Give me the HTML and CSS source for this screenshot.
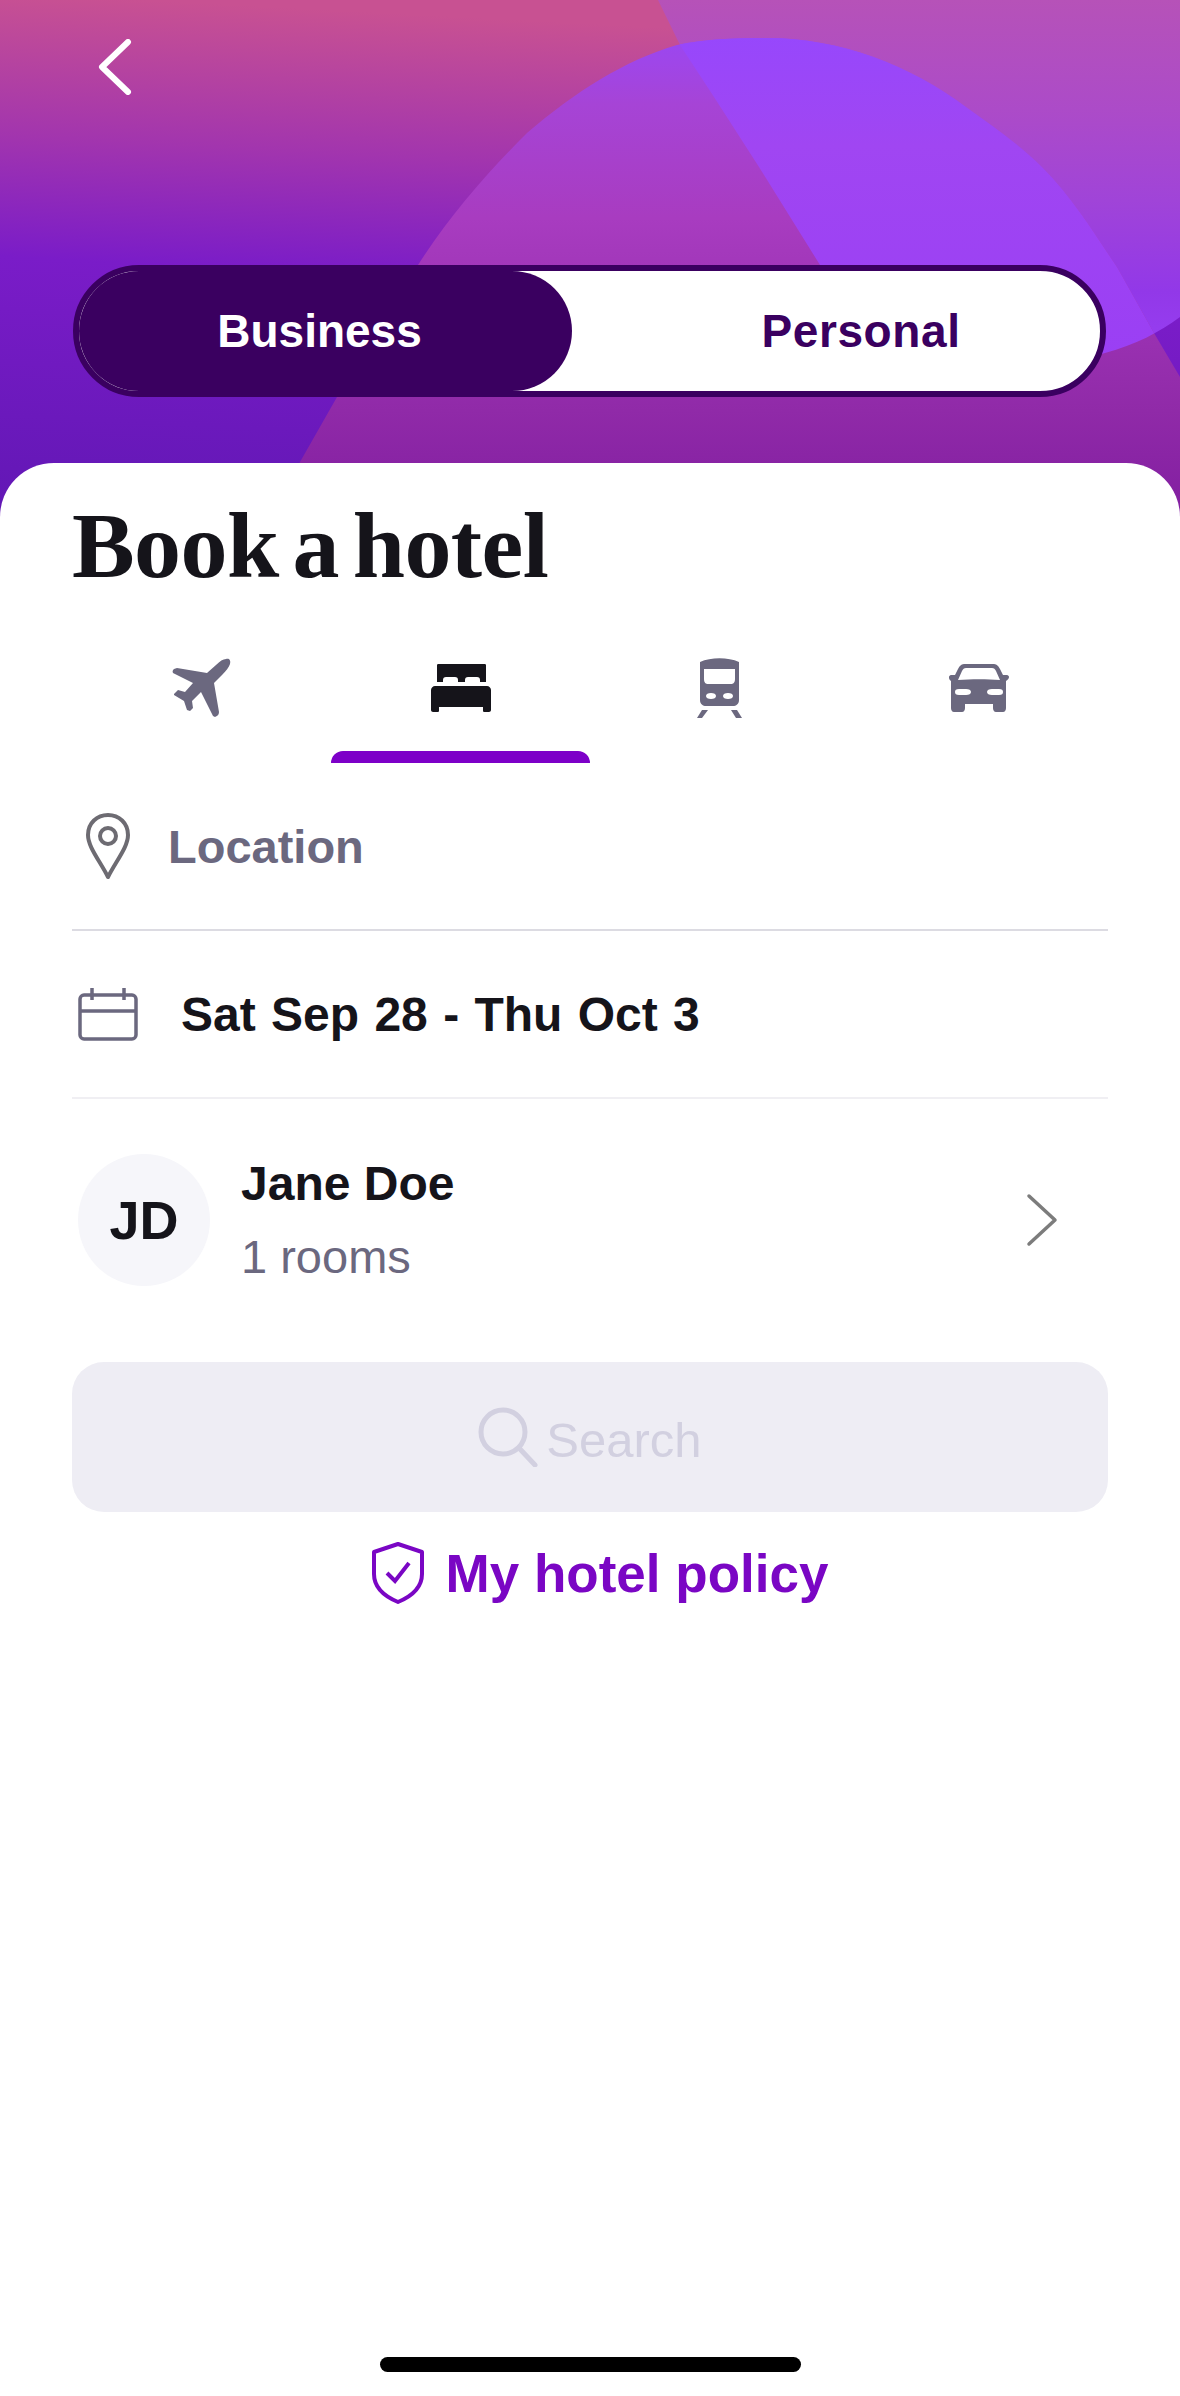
FILE: index.html
```html
<!DOCTYPE html>
<html lang="en">
<head>
    <meta charset="UTF-8">
    <meta name="viewport" content="width=device-width, initial-scale=1.0">
    <title>Book a hotel</title>
    <link rel="stylesheet" href="styles.css">
</head>
<body>
    <div class="screen">
        <header class="hero">
            <svg class="hero-bg" viewBox="0 0 1180 520" aria-hidden="true">
                <defs>
                    <linearGradient id="bgBase" x1="0.12" y1="0" x2="0" y2="1">
                        <stop offset="0" stop-color="#c85192"/>
                        <stop offset="0.27" stop-color="#a235ae"/>
                        <stop offset="0.5" stop-color="#7a1cc8"/>
                        <stop offset="1" stop-color="#6117b4"/>
                    </linearGradient>
                    <linearGradient id="bgBand" x1="0" y1="0" x2="0" y2="1">
                        <stop offset="0" stop-color="#b652b8"/>
                        <stop offset="0.3" stop-color="#ac4bc8"/>
                        <stop offset="0.55" stop-color="#a044d8"/>
                        <stop offset="0.8" stop-color="#9238e8"/>
                        <stop offset="1" stop-color="#9840f4"/>
                    </linearGradient>
                    <linearGradient id="bgHump" x1="0" y1="0" x2="0" y2="1">
                        <stop offset="0" stop-color="#9347ff"/>
                        <stop offset="0.12" stop-color="#9f46e8"/>
                        <stop offset="0.2" stop-color="#a644d6"/>
                        <stop offset="0.42" stop-color="#a83cc0"/>
                        <stop offset="0.79" stop-color="#902aa8"/>
                        <stop offset="0.96" stop-color="#8420a2"/>
                    </linearGradient>
                    <linearGradient id="bgBright" x1="0" y1="0" x2="0" y2="1">
                        <stop offset="0" stop-color="#9448ff"/>
                        <stop offset="0.4" stop-color="#a046f2"/>
                        <stop offset="1" stop-color="#9a3ff4"/>
                    </linearGradient>
                    <clipPath id="humpClip">
                        <path d="M267 520 L337 397 L418 265 C450 215 490 170 527 133 C575 92 625 60 677 45 C705 39 735 38 767 38 C840 38 910 65 966 107 C995 128 1020 145 1042 167 C1075 200 1095 235 1117 267 L1154 333 L1180 377 L1180 520 Z"/>
                    </clipPath>
                </defs>
                <rect width="1180" height="520" fill="url(#bgBase)"/>
                <path d="M658 0 L680 45 L714 97 L759 167 L820 265 C880 345 1000 385 1105 353 C1135 345 1160 332 1180 317 L1180 0 Z" fill="url(#bgBand)"/>
                <rect width="1180" height="520" fill="url(#bgHump)" clip-path="url(#humpClip)"/>
                <g clip-path="url(#humpClip)">
                    <path d="M658 0 L680 45 L714 97 L759 167 L820 265 C880 345 1000 385 1105 353 C1135 345 1160 332 1180 317 L1180 0 Z" fill="url(#bgBright)"/>
                </g>
            </svg>
            <a class="back" href="#" aria-label="Back">
                <svg viewBox="0 0 34 56" width="34" height="56"><path d="M30 3 L4 28 L30 53" fill="none" stroke="#fff" stroke-width="6" stroke-linecap="round" stroke-linejoin="round"/></svg>
            </a>
            <div class="toggle">
                <button class="toggle-btn active">Business</button>
                <button class="toggle-btn">Personal</button>
            </div>
        </header>

        <main class="sheet">
            <h1 class="title">Book a hotel</h1>

            <nav class="tabs">
                <a class="tab" href="#" aria-label="Flights">
                    <svg viewBox="0 0 60 60" width="60" height="60"><path fill="#6b687f" d="M54 1c3-1 5 1 4 5-1 3-4 7-8 11l-8 8 5 29c0 2-1 4-4 5l-2-1-12-24-9 9 1 7-3 3-3-1-3-9-10-6v-1l4-4 7 2 8-9L1 15c-1-2 0-3 1-4l3-1 30 5 9-8c4-4 7-6 10-6z"/></svg>
                </a>
                <a class="tab active" href="#" aria-label="Hotels">
                    <svg viewBox="0 0 60 48" width="60" height="48"><path fill="#15141a" fill-rule="evenodd" d="M7 0H54C55 0 55 1 55 2V18H49V16C49 14 48 13 46 13H37C35 13 34 14 34 16V18H27V16C27 14 26 13 24 13H15C13 13 12 14 12 16V18H6V2C6 1 6 0 7 0ZM4 22H56C58 22 60 24 60 26V46C60 47 59 48 58 48H53C52 48 52 47 52 46V43H8V46C8 47 8 48 7 48H2C1 48 0 47 0 46V26C0 24 2 22 4 22Z"/></svg>
                </a>
                <a class="tab" href="#" aria-label="Trains">
                    <svg viewBox="0 0 45 60" width="45" height="60"><path fill="#6b687f" fill-rule="evenodd" d="M3 4C14 -1 31 -1 42 4V42C42 46 39 48 36 48H9C6 48 3 46 3 42ZM7 11V21C7 25 9 26 11 26H34C36 26 38 25 38 21V11ZM14 35C11 35 9 36 9 38S11 41 14 41C17 41 19 40 19 38S17 35 14 35ZM31 35C28 35 26 36 26 38S28 41 31 41C34 41 36 40 36 38S34 35 31 35ZM5 52H11L5 60H0ZM34 52H40L45 60H39Z"/></svg>
                </a>
                <a class="tab" href="#" aria-label="Cars">
                    <svg viewBox="0 0 60 48" width="60" height="48"><path fill="#6b687f" fill-rule="evenodd" d="M16 0h28c3 0 5 1 7 5l3 6h4c1 0 2 1 2 2s-1 3-3 4v27c0 2-1 4-3 4h-7c-2 0-3-2-3-4v-4H16v4c0 2-1 4-3 4H5c-2 0-3-2-3-4V17c-2-1-2-3-2-4s1-2 2-2h4l3-6c2-4 4-5 7-5zM17 4c-2 0-3 1-4 3l-4 9c13-1 29-1 42 0l-4-9c-1-2-2-3-4-3zM10 25c-3 0-4 1-4 3s1 3 4 3h7c3 0 5-1 5-3s-2-3-5-3zM43 25c-3 0-5 1-5 3s2 3 5 3h7c3 0 4-1 4-3s-1-3-4-3z"/></svg>
                </a>
            </nav>

            <div class="row row-location">
                <svg class="row-icon" viewBox="0 0 46 66" width="46" height="66"><path d="M23 64 C15 48 3 34 3 22 C3 10 12 2 23 2 C34 2 43 10 43 22 C43 34 31 48 23 64 Z" fill="none" stroke="#6d6b72" stroke-width="4" stroke-linejoin="round"/><circle cx="23" cy="23" r="8" fill="none" stroke="#6d6b72" stroke-width="4"/></svg>
                <span class="placeholder">Location</span>
            </div>

            <div class="row row-date">
                <svg class="row-icon" viewBox="0 0 60 54" width="60" height="54"><path d="M6 8h48c2 0 4 2 4 4v36c0 2-2 4-4 4H6c-2 0-4-2-4-4V12c0-2 2-4 4-4zM2 24h56M14 1v12M46 1v12" fill="none" stroke="#6b687f" stroke-width="3.5"/></svg>
                <span class="value value-date">Sat Sep 28 - Thu Oct 3</span>
            </div>

            <div class="traveler">
                <div class="avatar">JD</div>
                <div class="traveler-info">
                    <div class="value traveler-name">Jane Doe</div>
                    <div class="traveler-sub">1 rooms</div>
                </div>
                <svg class="chevron" viewBox="0 0 32 54" width="32" height="54"><path d="M3 3 L29 27 L3 51" fill="none" stroke="#7c7c7c" stroke-width="3.5" stroke-linecap="round" stroke-linejoin="round"/></svg>
            </div>

            <button class="search" disabled>
                <svg viewBox="0 0 60 60" width="60" height="60"><circle cx="25" cy="25" r="22" fill="none" stroke="#d2d0e0" stroke-width="5"/><path d="M41 41 L57 58" fill="none" stroke="#d2d0e0" stroke-width="5" stroke-linecap="round"/></svg>
                <span class="search-label">Search</span>
            </button>

            <a class="policy" href="#">
                <svg viewBox="0 0 52 62" width="52" height="62"><path d="M26 2 L50 10 V32 C50 46 38 55 26 60 C14 55 2 46 2 32 V10 Z" fill="none" stroke="#7a06c4" stroke-width="4" stroke-linejoin="round"/><path d="M15 31 L23 39 L37 21" fill="none" stroke="#7a06c4" stroke-width="4"/></svg>
                <span>My hotel policy</span>
            </a>
        </main>

        <div class="home-bar"></div>
    </div>
</body>
</html>
```

FILE: styles.css
```css
* {
    box-sizing: border-box;
}
body {
    margin: 0;
    background-color: #fff;
    color: #15141a;
    font-family: "Liberation Sans", Arial, sans-serif;
}
a {
    text-decoration: none;
    color: inherit;
}
.screen {
    position: relative;
    width: 1180px;
    height: 2396px;
    overflow: hidden;
    display: flex;
    flex-direction: column;
}

/* header */
.hero {
    position: relative;
    height: 463px;
    flex-shrink: 0;
    padding: 39px 74px 0 73px;
}
.hero-bg {
    position: absolute;
    left: 0;
    top: 0;
    width: 1180px;
    height: 520px;
}
.back {
    position: relative;
    display: block;
    width: 34px;
    height: 56px;
    margin-left: 25px;
}
.back svg {
    display: block;
}
.toggle {
    position: relative;
    display: flex;
    height: 132px;
    margin-top: 170px;
    background-color: #fff;
    border: 6px solid #3a0060;
    border-radius: 66px;
}
.toggle-btn {
    flex: 1;
    padding: 0 0 0 50px;
    border: none;
    background: none;
    border-radius: 60px;
    color: #3a0060;
    font-family: inherit;
    font-size: 46px;
    font-weight: 700;
    letter-spacing: 0.6px;
}
.toggle-btn.active {
    flex: 0 0 493px;
    padding: 0 12px 0 0;
    background-color: #3a0060;
    color: #fff;
    letter-spacing: 0;
}

/* white sheet */
.sheet {
    position: relative;
    flex: 1;
    padding: 0 72px;
    background-color: #fff;
    border-radius: 54px 54px 0 0;
}
.title {
    margin: 30px 0 0;
    font-family: "Liberation Serif", serif;
    font-size: 94px;
    line-height: 104px;
    font-weight: 700;
    letter-spacing: -0.6px;
    word-spacing: -9px;
    color: #15141a;
}
.tabs {
    display: grid;
    grid-template-columns: repeat(4, 259px);
    margin-top: 22px;
    height: 144px;
}
.tab {
    display: flex;
    justify-content: center;
    align-items: center;
    height: 144px;
    padding-bottom: 6px;
}
.tab.active {
    position: relative;
}
.tab.active::after {
    content: "";
    position: absolute;
    left: 0;
    right: 0;
    bottom: 0;
    height: 12px;
    background-color: #7d00c8;
    border-radius: 12px 12px 0 0;
}

.row {
    display: flex;
    align-items: center;
    border-bottom: 2px solid #dcdbe2;
}
.row-location {
    height: 168px;
    padding-left: 13px;
    gap: 37px;
}
.row-date {
    height: 168px;
    padding-left: 6px;
    gap: 43px;
    border-bottom-color: #f0eff3;
}
.placeholder {
    font-size: 47px;
    font-weight: 700;
    color: #6b687f;
}
.value {
    font-size: 48px;
    font-weight: 700;
    color: #15141a;
}
.value-date {
    word-spacing: 2px;
}

.traveler {
    display: flex;
    align-items: center;
    height: 188px;
    padding: 0 50px 0 6px;
    margin-top: 27px;
}
.avatar {
    display: flex;
    align-items: center;
    justify-content: center;
    width: 132px;
    height: 132px;
    border-radius: 50%;
    background-color: #f6f6fa;
    font-size: 54px;
    font-weight: 700;
}
.traveler-info {
    flex: 1;
    margin-left: 31px;
}
.traveler-name {
    line-height: 56px;
}
.traveler-sub {
    margin-top: 17px;
    font-size: 47px;
    line-height: 56px;
    color: #6b687f;
}

.search {
    display: flex;
    align-items: center;
    justify-content: center;
    gap: 8px;
    width: 100%;
    height: 150px;
    margin-top: 48px;
    border: none;
    border-radius: 32px;
    background-color: #eeedf4;
    color: #d2d0e0;
    font-family: inherit;
    font-size: 49px;
}
.search-label {
    padding-top: 5px;
}
.policy {
    display: flex;
    align-items: center;
    justify-content: center;
    gap: 22px;
    margin-top: 30px;
    padding-left: 20px;
    color: #7a06c4;
    font-size: 53px;
    font-weight: 700;
}

.home-bar {
    position: absolute;
    left: 380px;
    top: 2357px;
    width: 421px;
    height: 15px;
    border-radius: 8px;
    background-color: #000;
}
```
